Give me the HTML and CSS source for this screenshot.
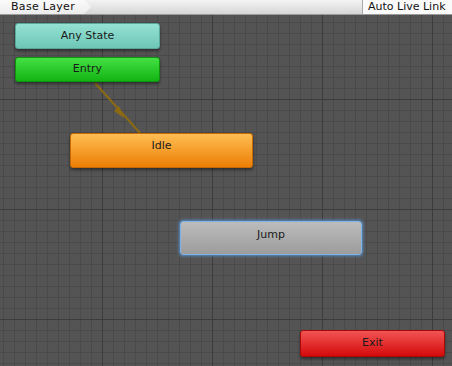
FILE: index.html
```html
<!DOCTYPE html>
<html lang="en">
<head>
  <meta charset="UTF-8" />
  <title>Animator - Base Layer</title>
  <link rel="stylesheet" href="styles.css">
</head>
<body>

<div class="toolbar">
  <div class="crumb">Base Layer</div>
  <div class="live-link">Auto Live Link</div>
</div>

<div class="canvas">
  <!-- transition Entry -> Idle -->
  <svg class="links" width="452" height="351">
    <line x1="95" y1="68" x2="140" y2="118" stroke="#8c6a14" stroke-width="2"/>
    <polygon points="124,103 114,96 119,91" fill="#8c6a14"/>
  </svg>

  <div class="state any" style="left:15px; top:8px; width:145px; height:26px;">Any State</div>
  <div class="state entry" style="left:15px; top:42px; width:145px; height:25px;">Entry</div>
  <div class="state idle" style="left:70px; top:118px; width:183px; height:35px;">Idle</div>
  <div class="state jump" style="left:180px; top:206px; width:182px; height:34px;">Jump</div>
  <div class="state exit" style="left:300px; top:315px; width:145px; height:27px;">Exit</div>
</div>

</body>
</html>
```

FILE: styles.css
```css
* {
  box-sizing: border-box;
}

body {
  margin: 0;
  width: 452px;
  height: 366px;
  overflow: hidden;
  font-family: "DejaVu Sans", Verdana, sans-serif;
  font-size: 11px;
  background: #545454;
}

.toolbar {
  height: 15px;
  display: flex;
  justify-content: space-between;
  background: linear-gradient(#f4f4f4, #d6d6d6);
  border-bottom: 1px solid #9a9a9a;
  color: #111;
}

.crumb {
  width: 91px;
  padding: 0 0 0 11px;
  line-height: 14px;
  letter-spacing: 0.3px;
  background: linear-gradient(#fbfbfb, #ececec);
  clip-path: polygon(0 0, 84px 0, 91px 50%, 84px 100%, 0 100%);
}

.live-link {
  width: 90px;
  padding-left: 5px;
  line-height: 14px;
  background: #fafafa;
  border-left: 1px solid #a8a8a8;
}

.canvas {
  position: relative;
  height: 351px;
  background-color: #545454;
  background-image:
    linear-gradient(90deg, #3c3c3c 1px, transparent 1px),
    linear-gradient(#3c3c3c 1px, transparent 1px),
    linear-gradient(90deg, #4a4a4a 1px, transparent 1px),
    linear-gradient(#4a4a4a 1px, transparent 1px);
  background-size: 110px 110px, 110px 110px, 11px 11px, 11px 11px;
  background-position: 102px 0, 0 84px, 3px 0, 0 7px;
}

.links {
  position: absolute;
  left: 0;
  top: 0;
}

.state {
  position: absolute;
  padding-top: 5px;
  line-height: 14px;
  text-align: center;
  border-radius: 3px;
  color: #1a1a1a;
  box-shadow: 0 2px 3px rgba(0, 0, 0, 0.45);
}

.any {
  background: linear-gradient(#94e2d4, #6ec6b6);
  border: 1px solid #5aa898;
}

.entry {
  padding-top: 4px;
  background: linear-gradient(#44e044, #12b412);
  border: 1px solid #0e940e;
}

.idle {
  background: linear-gradient(#ffbe52, #ec7e06);
  border: 1px solid #c86a04;
}

.jump {
  padding-top: 6px;
  background: linear-gradient(#bcbcbc, #9c9c9c);
  border: 1px solid #7fb2e6;
  box-shadow: 0 0 3px 1px #5a8ec4;
}

.exit {
  background: linear-gradient(#f25454, #d40a0a);
  border: 1px solid #a80808;
}
```
